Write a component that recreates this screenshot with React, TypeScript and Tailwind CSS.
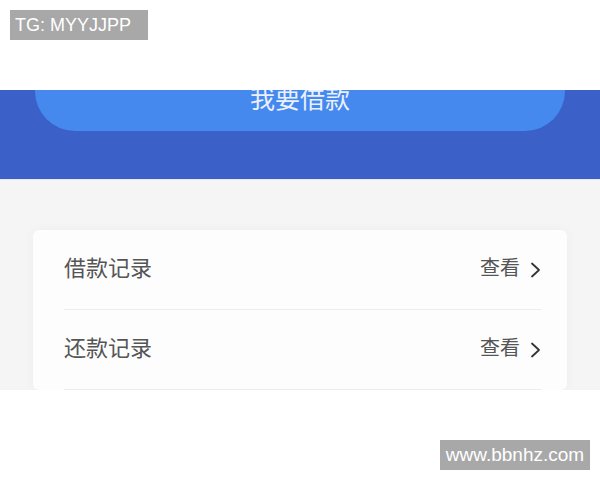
function Chevron() {
  return (
    <svg className="w-[11px] h-[16px] text-[#333] mt-[6px]" viewBox="0 0 11 16" fill="none" stroke="currentColor">
      <path d="M2 1.5l7 6.5-7 6.5" strokeWidth={1.8} strokeLinecap="round" strokeLinejoin="round" />
    </svg>
  );
}

function RecordRow({ title }: { title: string }) {
  return (
    <div className="h-[80px] flex items-center justify-between border-b border-[#ececec] pb-[6px]">
      <span className="text-[22px] text-[#555]">{title}</span>
      <div className="flex items-center gap-[10px] text-[20px] text-[#555]">
        <span>查看</span>
        <Chevron />
      </div>
    </div>
  );
}

export default function App() {
  return (
    <div
      className="relative w-[600px] h-[480px] bg-white overflow-hidden"
      style={{ fontFamily: '"Noto Sans CJK SC", "Noto Sans", sans-serif' }}
    >
      <div className="h-[90px]" />

      <div className="h-[90px] bg-[#3b61c8] overflow-hidden px-[35px] border-b border-[#e4e8f2]">
        <div className="-mt-[50px] h-[91px] rounded-[40px] bg-[#4589ef] flex flex-col items-center justify-end pb-[21px]">
          <span className="text-[25px] leading-[25px] text-[#eaf1fd]">我要借款</span>
        </div>
      </div>

      <div className="h-[210px] bg-[#f5f5f5] overflow-hidden px-[33px] pt-[50px]">
        <div className="bg-[#fdfdfd] rounded-[6px] shadow-[0_0_12px_rgba(0,0,0,0.04)] pl-[31px] pr-[26px]">
          <RecordRow title="借款记录" />
          <RecordRow title="还款记录" />
        </div>
      </div>

      <div
        className="absolute left-[10px] top-[10px] w-[138px] h-[30px] bg-[#a8a8a8] text-white text-[18px] flex items-center pl-[5px]"
        style={{ fontFamily: '"Liberation Sans", Arial, sans-serif' }}
      >
        TG: MYYJJPP
      </div>
      <div
        className="absolute left-[440px] top-[440px] w-[150px] h-[30px] bg-[#a8a8a8] text-white text-[19px] flex items-center justify-center"
        style={{ fontFamily: '"Liberation Sans", Arial, sans-serif' }}
      >
        www.bbnhz.com
      </div>
    </div>
  );
}
